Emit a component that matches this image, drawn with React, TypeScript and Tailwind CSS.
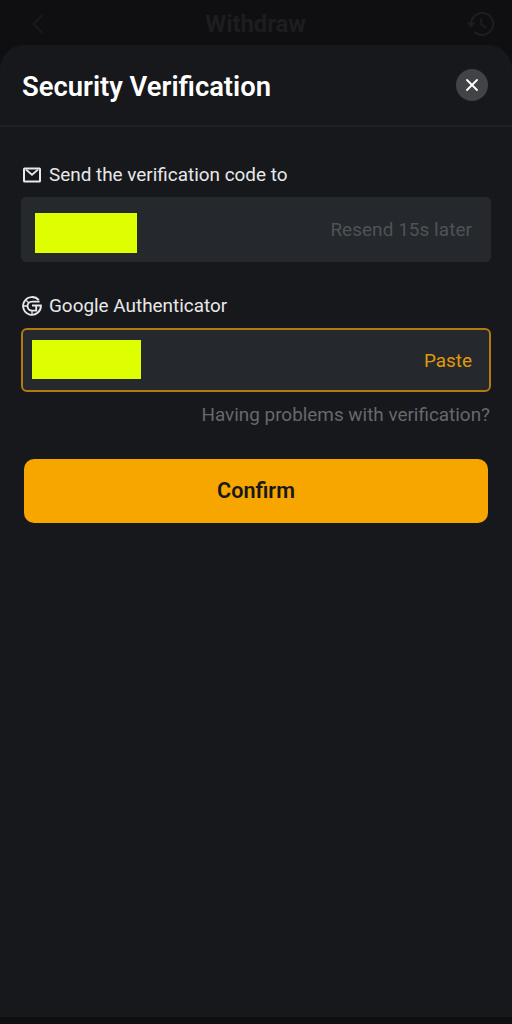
import type { ReactNode } from "react";
import { X } from "lucide-react";

type FieldProps = {
  icon: ReactNode;
  label: string;
  children: ReactNode;
};

function BackIcon() {
  return (
    <svg width="12" height="20" viewBox="0 0 12 20" fill="none">
      <path d="M10.5 1 1.5 10l9 9" stroke="currentColor" strokeWidth="1.5" />
    </svg>
  );
}

function HistoryIcon() {
  return (
    <svg width="28" height="26" viewBox="0 0 28 26" fill="none">
      <path
        d="M5.1 13a11 11 0 1 1 3.4 7.9"
        stroke="currentColor"
        strokeWidth="2.2"
      />
      <path d="M.3 11.5h9.4L5 17z" fill="currentColor" />
      <path d="M15.2 7v6.2l5.2 3.8" stroke="currentColor" strokeWidth="2" />
    </svg>
  );
}

function MailIcon() {
  return (
    <svg width="20" height="18" viewBox="0 0 20 18" fill="none">
      <rect
        x="2"
        y="2.4"
        width="16"
        height="13.2"
        rx=".6"
        stroke="currentColor"
        strokeWidth="2"
      />
      <path
        d="m4 3.6 6 5.2 6-5.2"
        stroke="currentColor"
        strokeWidth="1.9"
      />
    </svg>
  );
}

function AuthenticatorIcon() {
  return (
    <svg width="20" height="20" viewBox="0 0 20 20" fill="none">
      <g stroke="currentColor" strokeWidth="1.9">
        <path d="M16.8 4.2A8.9 8.9 0 1 0 18.9 9.5H10" />
        <path d="M17.6 5.6H10a4.5 4.5 0 1 0 0 9h4.2V9.5" />
        <path d="M1.2 10h4M10 14.6v4M4.2 4.4l2.6 2.4" strokeWidth="1.3" />
      </g>
    </svg>
  );
}

function Field({ icon, label, children }: FieldProps) {
  return (
    <div>
      <div className="flex h-6 items-center gap-[7px] text-[#e8e8ea]">
        <span className="ml-px">{icon}</span>
        <span>{label}</span>
      </div>
      {children}
    </div>
  );
}

export default function App() {
  return (
    <div className="flex h-[1024px] w-[512px] flex-col overflow-hidden bg-[#0f0f11] font-['Roboto',sans-serif]">
      {/* Dimmed page header */}
      <header className="flex h-[45px] shrink-0 items-center justify-between pt-[3px] pr-[18px] pl-8 text-[#1d1d20]">
        <BackIcon />
        <span className="mr-[-2px] pr-px text-2xl font-bold tracking-[-0.1px]">
          Withdraw
        </span>
        <HistoryIcon />
      </header>

      {/* Verification sheet */}
      <main className="h-[972px] shrink-0 rounded-t-[24px] bg-[#17181b]">
        <div className="flex h-[82px] items-center justify-between border-b-2 border-[#202226] pr-6 pl-[22px]">
          <h1 className="pt-[6px] text-[27.4px] font-semibold whitespace-nowrap text-white">
            Security Verification
          </h1>
          <button className="flex size-8 items-center justify-center rounded-full bg-[#414347] text-white">
            <X size={20} strokeWidth={2.2} />
          </button>
        </div>

        <div className="px-[21px] pt-9 text-[18.9px] leading-6">
          <Field icon={<MailIcon />} label="Send the verification code to">
            <div className="mt-[10px] flex h-[65px] items-center justify-between rounded-[5px] bg-[#25282c] pr-[19px] pl-[14px]">
              <div className="mt-[6px] h-[40px] w-[102px] bg-[#deff00]" />
              <span className="pt-px tracking-[0.08px] text-[#505257]">
                Resend 15s later
              </span>
            </div>
          </Field>

          <div className="mt-8">
            <Field icon={<AuthenticatorIcon />} label="Google Authenticator">
              <div className="mt-[10px] flex h-[64px] items-center justify-between rounded-[6px] border-2 border-[#b27b12] bg-[#25282c] pr-[17px] pl-[9px]">
                <div className="mb-[2px] h-[39px] w-[109px] bg-[#deff00]" />
                <span className="pt-px text-[#e39a07]">Paste</span>
              </div>
            </Field>
          </div>

          <p className="mt-[11px] pr-px text-right text-[#66686d]">
            Having problems with verification?
          </p>
          <button className="mx-[3px] mt-8 flex h-16 w-[464px] items-center justify-center rounded-[10px] bg-[#f7a600] text-[21.6px] font-semibold text-[#17181b]">
            Confirm
          </button>
        </div>
      </main>
    </div>
  );
}
